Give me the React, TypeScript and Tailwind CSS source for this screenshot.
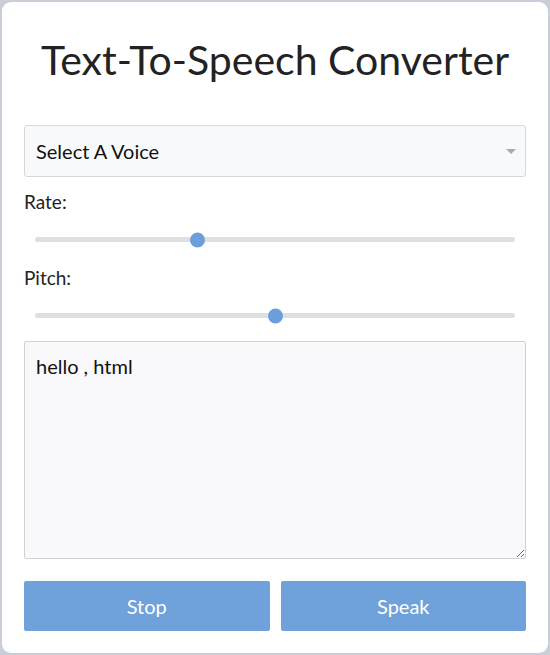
import React, { useState } from 'react';

// Simple range slider drawn with divs, value mapped onto the track
const Slider = ({ min, max, value }: { min: number; max: number; value: number }) => {
  const pct = (value - min) / (max - min);
  return <div className="px-[11px] py-[6px]">
      <div className="relative h-[5px] rounded-full bg-[#dedfe1]">
        <div className="absolute top-1/2 h-[15px] w-[15px] -translate-y-1/2 rounded-full bg-[#6a9fdc]" style={{ left: `calc(${pct} * (100% - 15px))` }} />
      </div>
    </div>;
};

export default function App() {
  const [text, setText] = useState('hello , html');
  return <div className="h-[655px] w-[550px] bg-[#c9ced8] p-[2px]" style={{ fontFamily: 'Lato, "Noto Sans", sans-serif' }}>
      <div className="flex h-full flex-col rounded-[9px] bg-white px-[22px] pt-[33px]">
        <h1 className="text-center text-[41px] leading-[50px] text-[#222]">Text-To-Speech Converter</h1>
        <div className="mt-[40px] flex h-[52px] items-center justify-between rounded-[3px] border border-[#d6d8db] bg-[#f8f9fb] pl-[11px] pr-[9px]">
          <span className="text-[20px] text-[#111]">Select A Voice</span>
          <span className="h-0 w-0 border-x-[5px] border-t-[5px] border-x-transparent border-t-[#aaa]" />
        </div>
        <label className="mt-[12px] text-[19px] leading-[26px] text-[#222]">Rate:</label>
        <div className="mt-[16px]">
          <Slider min={0.5} max={2} value={1} />
        </div>
        <label className="mt-[17px] text-[19px] leading-[26px] text-[#222]">Pitch:</label>
        <div className="mt-[16px]">
          <Slider min={0} max={2} value={1} />
        </div>
        <textarea value={text} onChange={e => setText(e.target.value)} className="mt-[17px] h-[218px] rounded-[2px] border border-[#cfd1d4] bg-[#f9f9fb] px-[11px] pt-[11px] pb-[13px] text-[20px] leading-[26px] text-[#111] outline-none" />
        <div className="mt-[22px] grid grid-cols-2 gap-[11px]">
          <button className="h-[50px] rounded-[2px] bg-[#6fa1da] text-[20px] text-white">Stop</button>
          <button className="h-[50px] rounded-[2px] bg-[#6fa1da] text-[20px] text-white">Speak</button>
        </div>
      </div>
    </div>;
}
